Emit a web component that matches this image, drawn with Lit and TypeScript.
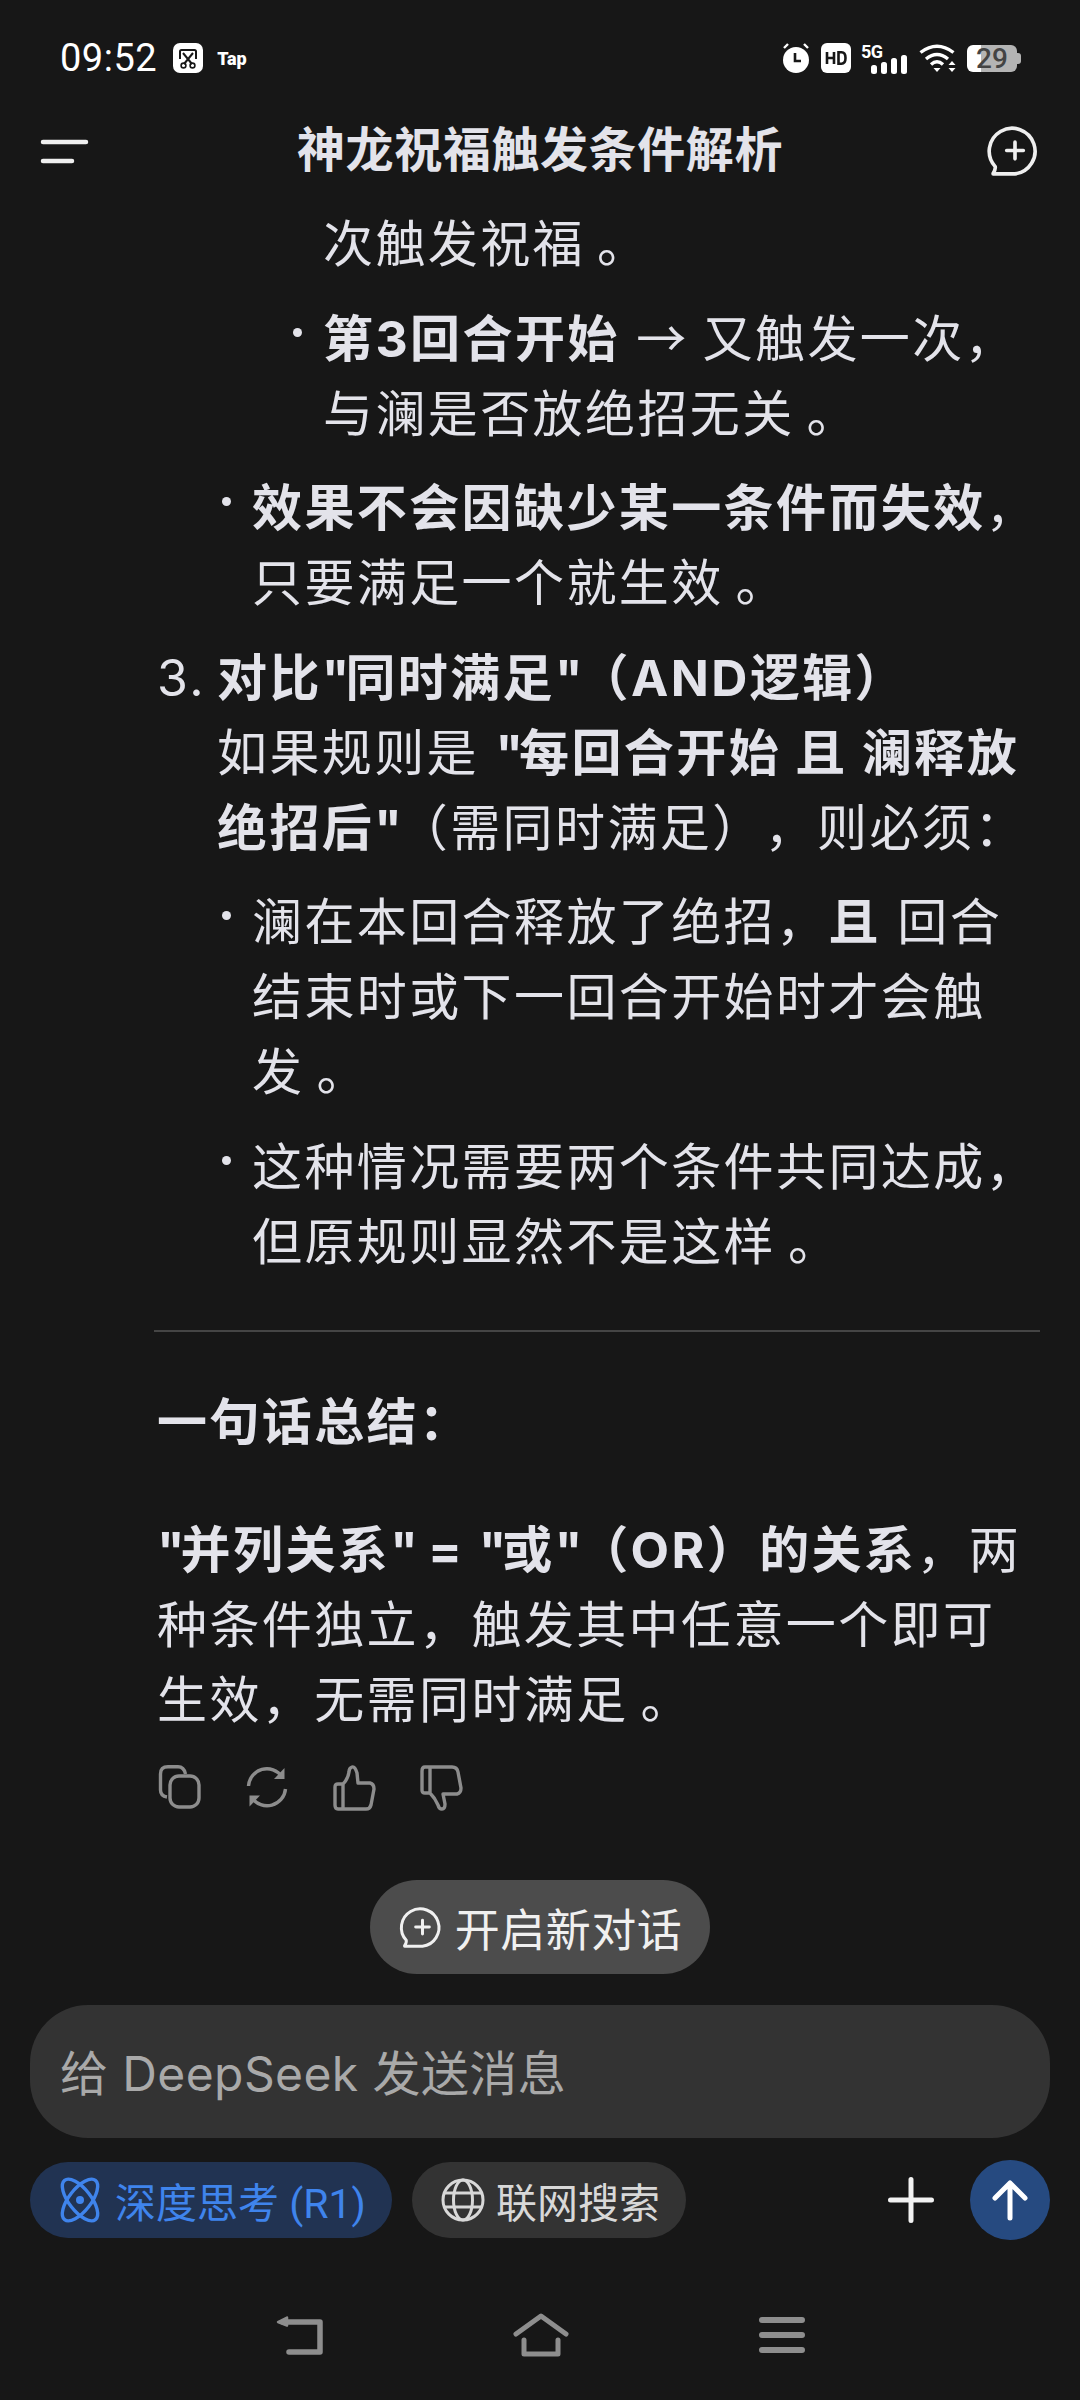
import { LitElement, html, css } from "lit";
import { customElement } from "lit/decorators.js";

@customElement("app-root")
export class AppRoot extends LitElement {
  static styles = css`
    :host { display: block; width: 1080px; height: 2400px; background: #171717; overflow: hidden;
      font-family: Roboto, "Noto Sans CJK SC", sans-serif; color: #e3e3ea; }
    .page { display: flex; flex-direction: column; height: 2400px; position: relative; }
    svg { display: block; flex: none; overflow: visible; }
    .status { height: 116px; flex: none; display: flex; align-items: center; padding: 0 60px; box-sizing: border-box; color: #fff; }
    .time { font-size: 38px; letter-spacing: 0.5px; margin-right: 16px; line-height: 1; }
    .tap { font-size: 18px; font-weight: 900; margin-left: 14px; }
    .sright { margin-left: auto; display: flex; align-items: center; gap: 10px; margin-right: 3px; }
    .batt { width: 50px; height: 27px; border-radius: 6px; background: linear-gradient(90deg, #fff 0 28%, #b4b4b4 28% 100%);
      color: #444; font-size: 28px; font-weight: 500; line-height: 27px; text-align: center; position: relative; }
    .batt::after { content: ""; position: absolute; right: -4px; top: 8px; width: 4px; height: 11px; background: #b4b4b4; border-radius: 0 3px 3px 0; }
    .header { height: 91px; flex: none; display: grid; grid-template-columns: 1fr auto 1fr; align-items: center; padding: 0 40px 22px; box-sizing: border-box; }
    .title { font-size: 48px; font-weight: 700; letter-spacing: 0.6px; line-height: 66px; }
    .hright { justify-self: end; color: #efefef; }
    .content { flex: none; height: 1789px; overflow: hidden; padding: 0 40px 0 157px; box-sizing: border-box; text-spacing-trim: space-all;
      font-family: Inter, "Noto Sans CJK SC", sans-serif; font-size: 50px; letter-spacing: 2.4px; line-height: 75px; }
    p { margin: 0 0 19.5px; }
    b { font-weight: 700; }
    .q { letter-spacing: -4px; }
    .arrow { font-family: "Noto Sans CJK SC", sans-serif; letter-spacing: 0; line-height: 0; }
    .stop { margin-left: 12px; }
    .l1, .l2, .num, .cont { position: relative; }
    .l1 { margin-left: 95px; }
    .l2, .cont { margin-left: 166px; }
    .l1::before, .l2::before { content: ""; position: absolute; left: -30px; top: 26px; width: 9px; height: 9px; border-radius: 50%; background: #e3e3ea; }
    .num { margin-left: 60px; margin-bottom: 19.5px; }
    .num .n { position: absolute; left: -60px; top: 0; }
    hr { border: 0; height: 2px; background: #454545; margin: 50px 0 0 -3px; }
    .h { margin-top: 53px; font-weight: 700; margin-bottom: 53px; }
    .actions { display: flex; gap: 45px; padding-left: 2px; margin-top: 27px; color: #8d8d8d; }
    .newchat { position: absolute; left: 370px; top: 1880px; width: 340px; height: 94px; border-radius: 47px; background: #4c4c4c; padding-left: 4px; box-sizing: border-box;
      display: flex; align-items: center; justify-content: center; gap: 12px; color: #f0f0f0; font-size: 45px; letter-spacing: 0.5px; }
    .input { margin: 9px 30px 0; flex: none; height: 133px; border-radius: 58px; background: #333; color: #a9a9a9; font-size: 48px; letter-spacing: 0.4px;
      font-family: Inter, "Noto Sans CJK SC", sans-serif; padding: 0 0 3px 30px; box-sizing: border-box; display: flex; align-items: center; }
    .tools { margin: 22px 30px 0; display: flex; align-items: center; height: 80px; flex: none; }
    .chip { height: 76px; border-radius: 38px; display: flex; align-items: center; box-sizing: border-box; font-size: 41px; }
    .deep { width: 362px; background: #213352; color: #3f84ec; padding-left: 29px; gap: 14px; }
    .web { width: 274px; background: #333; color: #d8d8d8; margin-left: 20px; padding-left: 29px; gap: 11px; }
    .plus { margin-left: auto; margin-right: 36px; }
    .send { width: 80px; height: 80px; border-radius: 50%; background: #264a80; display: flex; align-items: center; justify-content: center; }
    .nav { flex: none; display: flex; justify-content: center; align-items: center; gap: 190px; margin-top: 73px; color: #8e8e8e; }
  `;

  bubble(s: number, sw: number) {
    return html`<svg width=${s} height=${s} viewBox="0 0 48 48" fill="none" stroke="currentColor" stroke-width=${sw} stroke-linecap="round">
      <path d="M3 45.5 C4.5 43 5.5 41 5 39 A22 22 0 1 1 24 46 H3 Z" stroke-linejoin="round"/><path d="M16 23.5H32M24 15.5V31.5"/></svg>`;
  }

  render() {
    const q = html`<span class="q">"</span>`;
    const stop = html`<span class="stop">。</span>`;
    return html`<div class="page">
      <div class="status">
        <span class="time">09:52</span>
        <svg width="30" height="30" viewBox="0 0 30 30">
          <rect width="30" height="30" rx="7" fill="#fff"/>
          <path d="M7 16V8.5Q7 7 8.5 7H21.5Q23 7 23 8.5V16" fill="none" stroke="#171717" stroke-width="2"/>
          <path d="M10 10L19 21M20 10L11 21" stroke="#171717" stroke-width="2"/>
          <circle cx="10.5" cy="22.5" r="2.4" fill="none" stroke="#171717" stroke-width="1.6"/><circle cx="19.5" cy="22.5" r="2.4" fill="none" stroke="#171717" stroke-width="1.6"/>
        </svg>
        <span class="tap">Tap</span>
        <div class="sright">
          <svg width="30" height="30" viewBox="0 0 30 30" fill="#fff">
            <circle cx="15" cy="17" r="13"/><path d="M14 10V18H20" fill="none" stroke="#171717" stroke-width="2.6"/>
            <path d="M3 5L7 1M27 5L23 1" stroke="#fff" stroke-width="2.4" fill="none"/>
          </svg>
          <svg width="30" height="30" viewBox="0 0 30 30">
            <rect width="30" height="30" rx="6" fill="#fff"/>
            <path d="M6 9V21M13 9V21M6 15H13" stroke="#171717" stroke-width="2.6" fill="none"/>
            <path d="M17.5 9.3H20.5Q24.5 9.3 24.5 15T20.5 20.7H17.5Z" stroke="#171717" stroke-width="2.6" fill="none"/>
          </svg>
          <svg width="46" height="32" viewBox="0 0 46 32" fill="#fff">
            <text x="0" y="16" font-size="18" font-weight="700" font-family="Roboto" letter-spacing="-0.5">5G</text>
            <rect x="10" y="23" width="6" height="9" rx="2.5"/><rect x="20" y="20" width="6" height="12" rx="2.5"/><rect x="30" y="16" width="6" height="16" rx="2.5"/><rect x="40" y="13" width="6" height="19" rx="2.5"/>
          </svg>
          <svg width="38" height="30" viewBox="0 0 38 30" fill="none" stroke="#fff" stroke-width="3.4" style="margin-left:2px">
            <path d="M1.5 9.5Q18 -3 34.5 9.5M7 16Q18 7 29 16M12 21.5Q18 16 24 21.5"/>
            <path d="M14.5 25H21.5L18 29Z" fill="#fff" stroke="none"/>
            <path d="M33 18L36.5 22H29.5ZM33 29L29.5 25H36.5Z" fill="#fff" stroke="none"/>
          </svg>
          <div class="batt">29</div>
        </div>
      </div>
      <div class="header">
        <svg width="48" height="24" viewBox="0 0 48 24" stroke="#efefef" stroke-width="4.5" stroke-linecap="round"><path d="M3 3H46M3 22H32"/></svg>
        <div class="title">神龙祝福触发条件解析</div>
        <div class="hright">${this.bubble(50, 3.5)}</div>
      </div>
      <div class="content">
        <p class="cont">次触发祝福${stop}</p>
        <p class="l2"><b>第3回合开始</b> <span class="arrow">→</span> 又触发一次，与澜是否放绝招无关${stop}</p>
        <p class="l1"><b>效果不会因缺少某一条件而失效</b>，只要满足一个就生效${stop}</p>
        <div class="num"><span class="n">3.</span><b>对比${q}同时满足${q}（AND逻辑）</b><br>如果规则是 <b>${q}每回合开始 且 澜释放绝招后${q}</b>（需同时满足），则必须：</div>
        <p class="l1">澜在本回合释放了绝招，<b>且</b> 回合结束时或下一回合开始时才会触发${stop}</p>
        <p class="l1">这种情况需要两个条件共同达成，但原规则显然不是这样${stop}</p>
        <hr>
        <p class="h">一句话总结：</p>
        <p><b>${q}并列关系${q} = ${q}或${q}（OR）的关系</b>，两种条件独立，触发其中任意一个即可生效，无需同时满足${stop}</p>
        <div class="actions">
          <svg width="42" height="44" viewBox="0 0 42 44" fill="none" stroke="currentColor" stroke-width="3.4"><path d="M8 32Q1.5 31 1.5 25V9Q1.5 1.7 9 1.7H19Q25 1.7 26.5 9"/><rect x="11" y="11" width="29" height="31" rx="9"/></svg>
          <svg width="42" height="44" viewBox="0 0 42 44" fill="none" stroke="currentColor" stroke-width="3.4"><path d="M2.5 21A18.5 18.5 0 0 1 36 11.5M39.5 24A18.5 18.5 0 0 1 6 33"/><path d="M38.5 3V14H28Z" fill="currentColor" stroke="none"/><path d="M3.5 41.5V30.5H14Z" fill="currentColor" stroke="none"/></svg>
          <svg width="42" height="46" viewBox="0 0 42 46" fill="none" stroke="currentColor" stroke-width="3.4" stroke-linejoin="round"><path d="M10 19H5Q2 19 2 22V40Q2 44 5 44H33Q37 44 38 40L41 24Q41 19 37 18H25L24 8Q22 1 19 2Q16 3 16 7Q15 14 10 19V44"/></svg>
          <svg width="42" height="46" viewBox="0 0 42 46" fill="none" stroke="currentColor" stroke-width="3.4" stroke-linejoin="round"><path d="M10 28H5Q2 28 2 25V6Q2 2 5 2H32Q37 2 38 7L41 23Q41 28 37 29H23L25 39Q25 44 22 44Q19 44 18 40Q15 33 10 28V2"/></svg>
        </div>
      </div>
      <div class="newchat">${this.bubble(41, 3.5)}<span>开启新对话</span></div>
      <div class="input">给 DeepSeek 发送消息</div>
      <div class="tools">
        <div class="chip deep">
          <svg width="42" height="46" viewBox="0 0 42 46" fill="none" stroke="currentColor" stroke-width="3.4">
            <ellipse cx="21" cy="23" rx="11" ry="25" transform="rotate(-38 21 23)"/><ellipse cx="21" cy="23" rx="11" ry="25" transform="rotate(38 21 23)"/><circle cx="21" cy="23" r="4" fill="currentColor" stroke="none"/>
          </svg><span>深度思考 (R1)</span>
        </div>
        <div class="chip web">
          <svg width="44" height="44" viewBox="0 0 44 44" fill="none" stroke="currentColor" stroke-width="3"><circle cx="22" cy="22" r="20"/><ellipse cx="22" cy="22" rx="9.5" ry="20"/><path d="M3 15H41M3 29H41"/></svg><span>联网搜索</span>
        </div>
        <svg class="plus" width="46" height="46" viewBox="0 0 46 46" stroke="#f2f2f2" stroke-width="5" stroke-linecap="round"><path d="M2.5 23H43.5M23 2.5V43.5"/></svg>
        <div class="send"><svg width="36" height="40" viewBox="0 0 36 40" fill="none" stroke="#fff" stroke-width="5" stroke-linecap="round" stroke-linejoin="round"><path d="M18 38V3M3 18L18 3L33 18"/></svg></div>
      </div>
      <div class="nav">
        <svg width="48" height="40" viewBox="0 0 48 40" fill="none" stroke="currentColor" stroke-width="5.5" stroke-linecap="round" stroke-linejoin="round"><path d="M8 7H45V37H14"/><path d="M12 2.5L3 7L12 10.5Z" fill="currentColor" stroke-width="2.5"/></svg>
        <svg width="56" height="44" viewBox="0 0 56 44" fill="none" stroke="currentColor" stroke-width="5" stroke-linecap="round" stroke-linejoin="round"><path d="M3 21L28 3L53 21M11 27V41H45V27"/></svg>
        <svg width="46" height="36" viewBox="0 0 46 36" fill="none" stroke="currentColor" stroke-width="6" stroke-linecap="round"><path d="M3 3H43M3 18H43M3 33H43"/></svg>
      </div>
    </div>`;
  }
}
